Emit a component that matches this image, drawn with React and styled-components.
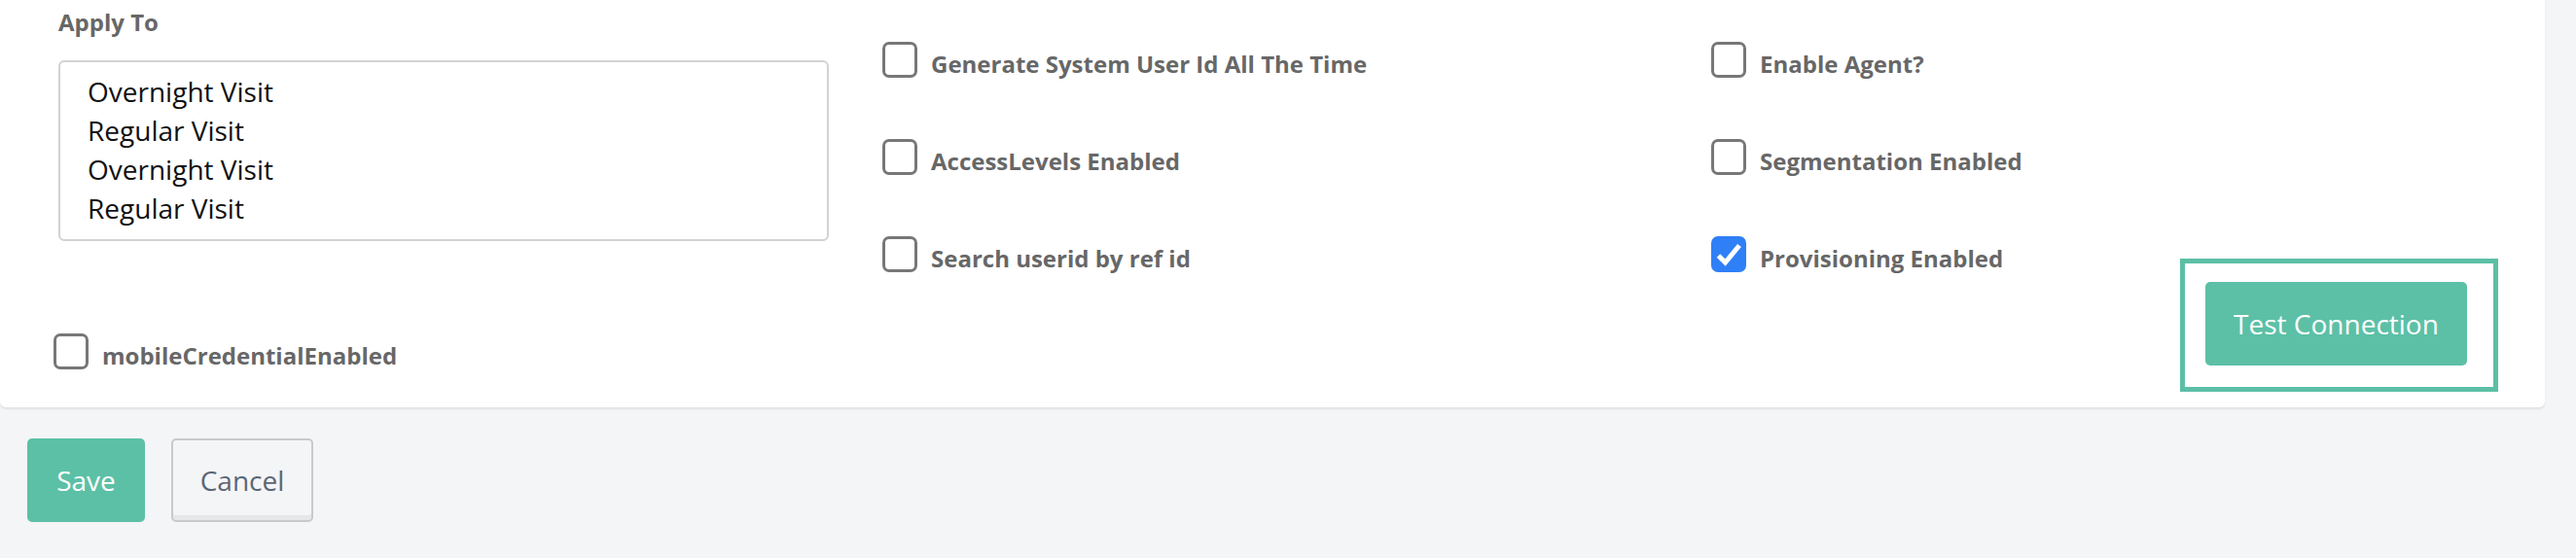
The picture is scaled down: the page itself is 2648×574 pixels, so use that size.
import React from 'react';
import styled, { createGlobalStyle } from 'styled-components';

const GlobalStyle = createGlobalStyle`
  body {
    margin: 0;
    background: #f4f5f7;
    font-family: "Open Sans", "Liberation Sans", sans-serif;
  }
`;

const Page = styled.div`
  padding-right: 32px;
`;

const Card = styled.div`
  background: #fff;
  border-radius: 0 0 6px 6px;
  box-shadow: 0 2px 2px rgba(0, 0, 0, 0.08);
  padding: 6px 60px 16px 60px;
  display: grid;
  grid-template-columns: repeat(3, 1fr);
  column-gap: 60px;
`;

const Column = styled.div`
  display: flex;
  flex-direction: column;
  padding-top: ${(p) => p.$offset || 0}px;
`;

const SideColumn = styled.div`
  display: flex;
  justify-content: space-between;
  padding-top: 37px;
`;

const FieldLabel = styled.div`
  font-size: 24px;
  line-height: 33.6px;
  font-weight: 700;
  color: #676767;
  margin-bottom: 22px;
`;

const ListBox = styled.div`
  box-sizing: border-box;
  height: 186px;
  border: 2px solid #d2d2d2;
  border-radius: 6px;
  padding: 10px 28px;
`;

const ListItem = styled.div`
  font-size: 28px;
  line-height: 40px;
  color: #111;
`;

const CheckList = styled.div`
  display: flex;
  flex-direction: column;
  gap: 63px;
`;

const CheckRow = styled.label`
  display: flex;
  align-items: flex-start;
  gap: 14px;
  margin-left: -5px;
  margin-top: ${(p) => p.$top || 0}px;
  margin-bottom: ${(p) => p.$bottom || 0}px;
`;

const Box = styled.span`
  box-sizing: border-box;
  flex: none;
  width: 36px;
  height: 37px;
  border-radius: 7px;
  border: ${(p) => (p.$checked ? 'none' : '3px solid #777')};
  background: ${(p) => (p.$checked ? '#2f7ff7' : '#fff')};
  display: flex;
  align-items: center;
  justify-content: center;
`;

const CheckText = styled.span`
  font-size: 24px;
  line-height: 26px;
  padding-top: 10px;
  font-weight: 700;
  color: #676767;
  white-space: nowrap;
`;

const TestBox = styled.div`
  align-self: flex-end;
  border: 5px solid #5cbfa5;
  padding: 19px 27px 22px 21px;
  margin-right: -12px;
`;

const Button = styled.button`
  box-sizing: border-box;
  height: 86px;
  width: ${(p) => p.$width}px;
  font-family: inherit;
  font-size: 28px;
  border-radius: 5px;
  cursor: pointer;
  background: ${(p) => (p.$primary ? '#5cc0a6' : '#f4f5f7')};
  color: ${(p) => (p.$primary ? '#fff' : '#5a6675')};
  border: ${(p) => (p.$primary ? 'none' : '2px solid #c8c9cc')};
  box-shadow: ${(p) => (p.$primary ? 'none' : 'inset 0 -5px 0 #e6e7e9')};
  padding: 0;
`;

const Actions = styled.div`
  display: flex;
  gap: 27px;
  padding: 32px 0 0 28px;
`;

const Check = ({ label, checked, top, bottom }) => (
  <CheckRow $top={top} $bottom={bottom}>
    <Box $checked={checked}>
      {checked && (
        <svg width="36" height="37" viewBox="0 0 36 37">
          <path d="M7.5 20 L14.5 27 L29 9.5" fill="none" stroke="#fff" strokeWidth="5" />
        </svg>
      )}
    </Box>
    <CheckText>{label}</CheckText>
  </CheckRow>
);

const visits = ['Overnight Visit', 'Regular Visit', 'Overnight Visit', 'Regular Visit'];

export default function App() {
  return (
    <Page>
      <GlobalStyle />
      <Card>
        <Column>
          <FieldLabel>Apply To</FieldLabel>
          <ListBox>
            {visits.map((v, i) => (
              <ListItem key={i}>{v}</ListItem>
            ))}
          </ListBox>
          <Check label="mobileCredentialEnabled" top={95} bottom={23} />
        </Column>
        <Column $offset={37}>
          <CheckList>
            <Check label="Generate System User Id All The Time" />
            <Check label="AccessLevels Enabled" />
            <Check label="Search userid by ref id" />
          </CheckList>
        </Column>
        <SideColumn>
          <CheckList>
            <Check label="Enable Agent?" />
            <Check label="Segmentation Enabled" />
            <Check label="Provisioning Enabled" checked />
          </CheckList>
          <TestBox>
            <Button $primary $width={269}>Test Connection</Button>
          </TestBox>
        </SideColumn>
      </Card>
      <Actions>
        <Button $primary $width={121}>Save</Button>
        <Button $width={146}>Cancel</Button>
      </Actions>
    </Page>
  );
}
